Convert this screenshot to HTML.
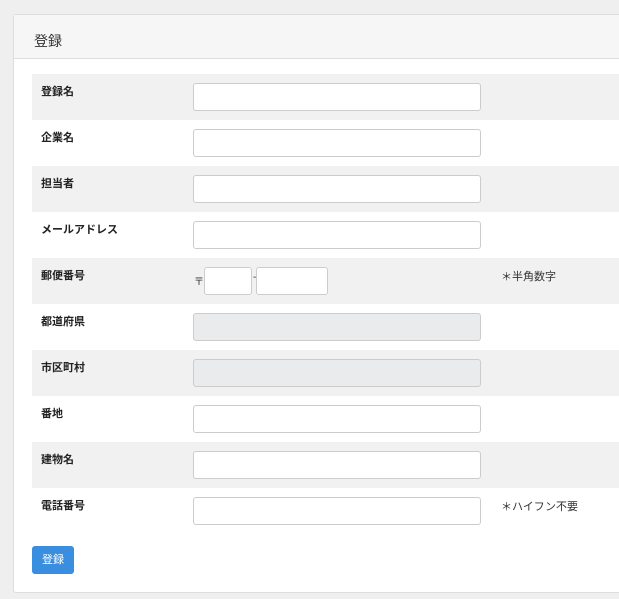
<!DOCTYPE html>
<html><head><meta charset="utf-8"><style>
*{box-sizing:border-box;margin:0;padding:0}
body{width:619px;height:599px;background:#efefef;font-family:"Liberation Sans","Noto Sans CJK JP",sans-serif;position:relative;overflow:hidden}
.panel{position:absolute;left:13px;top:14px;width:620px;height:579px;background:#fff;border:1px solid #ddd;border-radius:3px}
.hd{height:44px;background:#f6f6f6;border-bottom:1px solid #ddd;padding:16px 0 0 20px;font-size:14px;color:#333}
.row{position:absolute;left:18px;width:600px;height:46px}
.row.g{background:#f1f1f1}
.lb{position:absolute;left:9px;top:9px;font-size:11px;font-weight:bold;color:#222}
.in{position:absolute;left:161px;top:9px;width:288px;height:28px;background:#fff;border:1px solid #ccc;border-radius:3px}
.in.d{background:#e9ebed}
.nt{position:absolute;left:469px;top:10px;font-size:11px;color:#333}
.btn{position:absolute;left:18px;top:531px;width:42px;height:28px;background:#3a8ee0;border-radius:3px;color:#fff;font-size:11px;text-align:center;line-height:28px}
</style></head><body>
<div class="panel">
<div class="hd">登録</div>
<div class="row g" style="top:59px"><div class="lb">登録名</div><div class="in"></div></div>
<div class="row" style="top:105px"><div class="lb">企業名</div><div class="in"></div></div>
<div class="row g" style="top:151px"><div class="lb">担当者</div><div class="in"></div></div>
<div class="row" style="top:197px"><div class="lb">メールアドレス</div><div class="in"></div></div>
<div class="row g" style="top:243px"><div class="lb">郵便番号</div>
<span style="position:absolute;left:162px;top:15px;font-size:10px;color:#333">〒</span>
<div class="in" style="left:172px;width:48px"></div>
<span style="position:absolute;left:221px;top:14px;font-size:10px;color:#333">-</span>
<div class="in" style="left:224px;width:72px"></div>
<div class="nt">＊半角数字</div></div>
<div class="row" style="top:289px"><div class="lb">都道府県</div><div class="in d"></div></div>
<div class="row g" style="top:335px"><div class="lb">市区町村</div><div class="in d"></div></div>
<div class="row" style="top:381px"><div class="lb">番地</div><div class="in"></div></div>
<div class="row g" style="top:427px"><div class="lb">建物名</div><div class="in"></div></div>
<div class="row" style="top:473px"><div class="lb">電話番号</div><div class="in"></div><div class="nt">＊ハイフン不要</div></div>
<div class="btn">登録</div>
</div>
</body></html>
